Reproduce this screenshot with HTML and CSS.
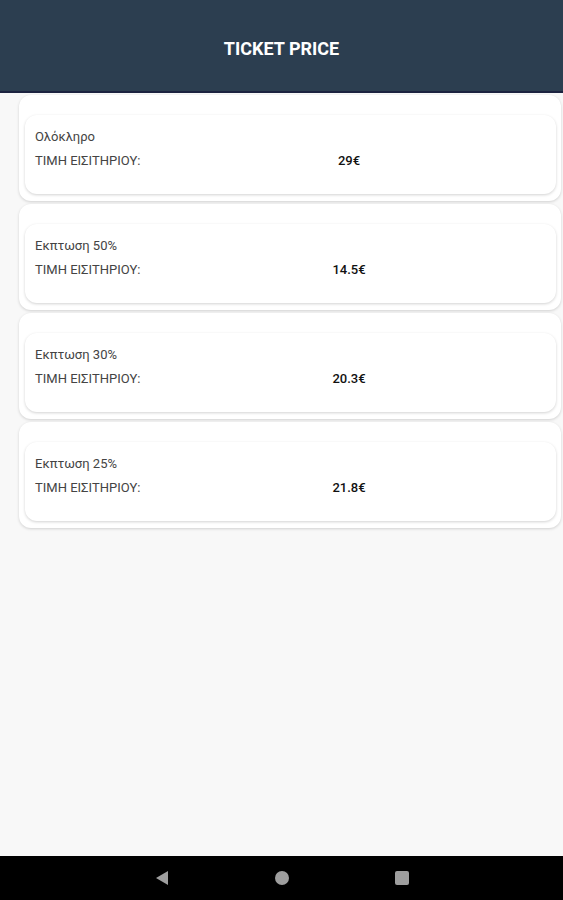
FILE: index.html
```html
<!DOCTYPE html>
<html lang="el">
<head>
  <meta charset="UTF-8">
  <meta name="viewport" content="width=device-width, initial-scale=1.0">
  <title>Ticket Price</title>
  <link rel="stylesheet" href="styles.css">
</head>
<body>
  <div class="screen">
    <!-- Top bar -->
    <header class="app-bar">
      <h1>TICKET PRICE</h1>
    </header>

    <!-- Price list -->
    <main class="price-list">
      <div class="card">
        <div class="card-inner">
          <div class="ticket-type">Ολόκληρο</div>
          <div class="price-row">
            <span class="price-label">ΤΙΜΗ ΕΙΣΙΤΗΡΙΟΥ:</span>
            <span class="price-value">29€</span>
          </div>
        </div>
      </div>
      <div class="card">
        <div class="card-inner">
          <div class="ticket-type">Εκπτωση 50%</div>
          <div class="price-row">
            <span class="price-label">ΤΙΜΗ ΕΙΣΙΤΗΡΙΟΥ:</span>
            <span class="price-value">14.5€</span>
          </div>
        </div>
      </div>
      <div class="card">
        <div class="card-inner">
          <div class="ticket-type">Εκπτωση 30%</div>
          <div class="price-row">
            <span class="price-label">ΤΙΜΗ ΕΙΣΙΤΗΡΙΟΥ:</span>
            <span class="price-value">20.3€</span>
          </div>
        </div>
      </div>
      <div class="card">
        <div class="card-inner">
          <div class="ticket-type">Εκπτωση 25%</div>
          <div class="price-row">
            <span class="price-label">ΤΙΜΗ ΕΙΣΙΤΗΡΙΟΥ:</span>
            <span class="price-value">21.8€</span>
          </div>
        </div>
      </div>
    </main>

    <!-- Android navigation bar -->
    <nav class="nav-bar">
      <svg width="14" height="16" viewBox="0 0 14 16"><path d="M13 1 L1 8 L13 15 Z" fill="#9e9e9e"/></svg>
      <svg width="14" height="14" viewBox="0 0 14 14"><circle cx="7" cy="7" r="7" fill="#9e9e9e"/></svg>
      <svg width="14" height="14" viewBox="0 0 14 14"><rect x="0" y="0" width="14" height="14" rx="2" fill="#9e9e9e"/></svg>
    </nav>
  </div>
</body>
</html>
```

FILE: styles.css
```css
body {
  margin: 0;
  padding: 0;
  font-family: Roboto, "Noto Sans", sans-serif;
  background-color: #f8f8f8;
}
.screen {
  width: 563px;
  height: 900px;
  display: flex;
  flex-direction: column;
}
.app-bar {
  height: 93px;
  background-color: #2c3e50;
  border-bottom: 2px solid #1c2340;
  box-sizing: border-box;
  display: flex;
  align-items: center;
  justify-content: center;
  padding-top: 6px;
}
.app-bar h1 {
  margin: 0;
  color: #fff;
  font-size: 18px;
  font-weight: bold;
}
.price-list {
  flex: 1;
  padding: 2px 2px 0 19px;
  display: flex;
  flex-direction: column;
  gap: 3px;
}
.card {
  height: 106px;
  box-sizing: border-box;
  background-color: #fff;
  border-radius: 12px;
  box-shadow: 0 1px 3px rgba(0, 0, 0, 0.16);
  padding: 20px 5px 0 6px;
}
.card-inner {
  height: 79px;
  box-sizing: border-box;
  background-color: #fff;
  border-radius: 12px;
  box-shadow: 0 1px 3px rgba(0, 0, 0, 0.18);
  padding: 14px 10px 0 10px;
}
.ticket-type {
  font-size: 13px;
  color: #444;
  line-height: 16px;
}
.price-row {
  display: flex;
  margin-top: 8px;
  font-size: 13px;
  line-height: 16px;
}
.price-label {
  width: 264px;
  color: #444;
}
.price-value {
  width: 100px;
  text-align: center;
  color: #111;
  font-weight: 500;
}
.nav-bar {
  height: 44px;
  background-color: #000;
  display: flex;
  align-items: center;
  justify-content: center;
  gap: 106px;
}
```
